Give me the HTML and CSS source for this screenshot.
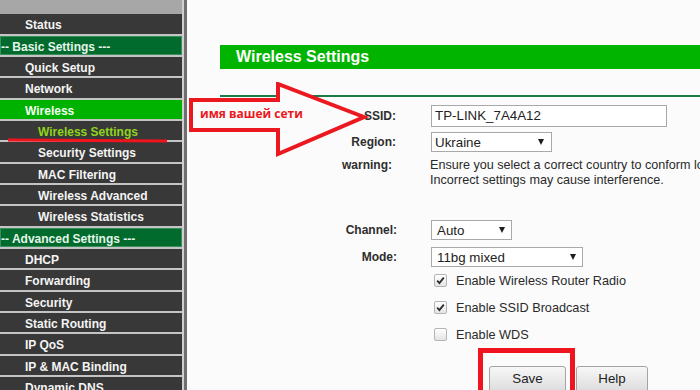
FILE: index.html
```html
<!DOCTYPE html>
<html>
<head>
<meta charset="utf-8">
<link rel="stylesheet" href="styles.css">
</head>
<body>
<div class="page">
  <nav class="side">
    <div class="side-top"></div>
    <ul class="menu">
      <li class="item">Status</li>
      <li class="section">-- Basic Settings ---</li>
      <li class="item">Quick Setup</li>
      <li class="item">Network</li>
      <li class="item active">Wireless</li>
      <li class="sub current">Wireless Settings</li>
      <li class="sub">Security Settings</li>
      <li class="sub">MAC Filtering</li>
      <li class="sub">Wireless Advanced</li>
      <li class="sub">Wireless Statistics</li>
      <li class="section">-- Advanced Settings ---</li>
      <li class="item">DHCP</li>
      <li class="item">Forwarding</li>
      <li class="item">Security</li>
      <li class="item">Static Routing</li>
      <li class="item">IP QoS</li>
      <li class="item">IP &amp; MAC Binding</li>
      <li class="item">Dynamic DNS</li>
    </ul>
  </nav>
  <div class="divider"></div>
  <main class="main">
    <div class="title">Wireless Settings</div>
    <div class="rule"></div>
    <div class="form">
      <div class="row r-ssid">
        <div class="label">SSID:</div>
        <div class="input">TP-LINK_7A4A12</div>
      </div>
      <div class="row r-region">
        <div class="label">Region:</div>
        <div class="select w-region"><span>Ukraine</span><i class="caret"></i></div>
      </div>
      <div class="row r-warn">
        <div class="label">warning:</div>
        <div class="warn">Ensure you select a correct country to conform local law.<br>Incorrect settings may cause interference.</div>
      </div>
      <div class="row r-channel">
        <div class="label">Channel:</div>
        <div class="select w-channel"><span>Auto</span><i class="caret"></i></div>
      </div>
      <div class="row r-mode">
        <div class="label">Mode:</div>
        <div class="select w-mode"><span>11bg mixed</span><i class="caret"></i></div>
      </div>
      <div class="row r-check">
        <div class="label"></div>
        <div class="check"><span class="cb"><svg viewBox="0 0 13 13" width="13" height="13"><path d="M3.2 6.6 L5.4 9 L9.8 3.6" fill="none" stroke="#2b2b2b" stroke-width="1.8"/></svg></span>Enable Wireless Router Radio</div>
      </div>
      <div class="row r-check">
        <div class="label"></div>
        <div class="check"><span class="cb"><svg viewBox="0 0 13 13" width="13" height="13"><path d="M3.2 6.6 L5.4 9 L9.8 3.6" fill="none" stroke="#2b2b2b" stroke-width="1.8"/></svg></span>Enable SSID Broadcast</div>
      </div>
      <div class="row r-check">
        <div class="label"></div>
        <div class="check"><span class="cb"></span>Enable WDS</div>
      </div>
      <div class="row r-buttons">
        <div class="label"></div>
        <div class="buttons">
          <button class="btn btn-save">Save</button>
          <button class="btn btn-help">Help</button>
        </div>
      </div>
    </div>
  </main>
</div>

<div class="mark-underline"></div>
<svg class="mark-arrow" width="190" height="90" viewBox="0 0 190 90">
  <polygon points="3,18 90,18 90,2 176,35 90,72 90,48 3,48" fill="#fbfbfb" stroke="#ec1820" stroke-width="4" stroke-linejoin="miter"/>
</svg>
<div class="mark-text">имя вашей сети</div>
<div class="mark-box"></div>
</body>
</html>
```

FILE: styles.css
```css
* { box-sizing: border-box; }
html, body { margin: 0; padding: 0; }
body {
  width: 700px;
  height: 390px;
  overflow: hidden;
  background: #fbfbfb;
  font-family: "Liberation Sans", Arial, sans-serif;
  color: #333;
  position: relative;
}
.page {
  display: flex;
  height: 390px;
}
.side {
  width: 184px;
  flex: none;
  background: #a7a7a7;
  border-right: 2px solid #cfcfcf;
}
.side-top {
  height: 14.3px;
  background: #a7a7a7;
}
.menu {
  list-style: none;
  margin: 0;
  padding: 0;
}
.menu li {
  height: 21.35px;
  padding-top: 3px;
  line-height: 16.35px;
  border-bottom: 2px solid #c4c4c4;
  background: #383838;
  color: #f4f4f4;
  font-size: 12px;
  font-weight: bold;
  white-space: nowrap;
  overflow: hidden;
}
.menu .item { padding-left: 25px; }
.menu .sub { padding-left: 38px; }
.menu .section {
  padding-left: 1px;
  background: #006b2c;
  box-shadow: inset 0 0 0 1px #3c8f5c;
  color: #e6f5ea;
}
.menu .active {
  background: #00b200;
  color: #f4fff4;
}
.menu .current { color: #8fd41c; }
.divider {
  width: 3px;
  flex: none;
  background: #6f6f6f;
}
.main {
  flex: 1;
  min-width: 0;
  overflow: hidden;
  padding-left: 33px;
  padding-top: 45px;
}
.title {
  height: 24px;
  line-height: 24px;
  background: #00b400;
  color: #fff;
  font-size: 16px;
  font-weight: bold;
  padding-left: 16px;
}
.rule {
  margin-top: 26px;
  height: 2px;
  background: #1b7a45;
}
.form { padding-top: 8px; }
.row {
  display: flex;
  align-items: center;
}
.label {
  width: 176px;
  flex: none;
  text-align: right;
  font-size: 12px;
  font-weight: bold;
  color: #2e2e2e;
  margin-right: 35px;
}
.input {
  width: 236px;
  height: 22px;
  line-height: 20px;
  border: 1px solid #a9a9a9;
  background: #fff;
  font-size: 13.33px;
  color: #222;
  padding-left: 3px;
}
.select {
  height: 20px;
  border: 1px solid #a9a9a9;
  background: #fff;
  font-size: 13.33px;
  color: #222;
  display: flex;
  align-items: center;
  justify-content: space-between;
  padding: 0 7px 0 3px;
}
.caret {
  width: 0;
  height: 0;
  border-left: 3px solid transparent;
  border-right: 3px solid transparent;
  border-top: 6px solid #1e1e1e;
}
.r-region { margin-top: 5px; }
.w-region { width: 121px; }
.r-warn { margin-top: 6px; align-items: flex-start; }
.r-warn .label { line-height: 15px; margin-right: 38px; text-align: right; width: 172px; }
.warn {
  font-size: 12.6px;
  line-height: 15px;
  color: #2a2a2a;
  white-space: nowrap;
}
.r-channel { margin-top: 32px; }
.r-channel .label, .r-mode .label { margin-right: 34px; width: 177px; }
.w-channel { width: 81px; padding-left: 5px; padding-right: 6px; }
.r-mode { margin-top: 7px; }
.w-mode { width: 152px; padding-left: 5px; padding-right: 6px; }
.r-check { height: 27px; }
.check {
  display: flex;
  align-items: center;
  font-size: 12.7px;
  color: #2a2a2a;
}
.cb {
  width: 13px;
  height: 13px;
  margin-left: 3px;
  margin-right: 9px;
  border: 1px solid #b4b4b4;
  border-radius: 2px;
  background: linear-gradient(#ffffff, #e4e4e4);
  position: relative;
  display: block;
}
.cb svg {
  position: absolute;
  left: -1px;
  top: -1px;
}
.r-buttons { margin-top: 18px; }
.buttons {
  display: flex;
  gap: 10px;
  margin-left: 58px;
}
.btn {
  height: 27px;
  border: 1px solid #a4a4a4;
  border-radius: 3px;
  background: linear-gradient(#f7f7f7, #dcdcdc);
  font-family: "Liberation Sans", Arial, sans-serif;
  font-size: 13.33px;
  color: #222;
  padding: 0 0 2px 0;
}
.btn-save { width: 77px; }
.btn-help { width: 72px; }

/* annotations drawn over the screenshot */
.mark-underline {
  position: absolute;
  left: 8px;
  top: 139px;
  width: 159px;
  height: 3px;
  background: #f0141c;
  transform: rotate(0.3deg);
}
.mark-arrow {
  position: absolute;
  left: 188px;
  top: 82px;
}
.mark-text {
  position: absolute;
  left: 200px;
  top: 105px;
  font-family: "Open Sans", "Liberation Sans", sans-serif;
  font-weight: bold;
  font-size: 12px;
  color: #ec1820;
  white-space: nowrap;
}
.mark-box {
  position: absolute;
  left: 478px;
  top: 348px;
  width: 97px;
  height: 60px;
  border: 5px solid #ee1520;
}
```
